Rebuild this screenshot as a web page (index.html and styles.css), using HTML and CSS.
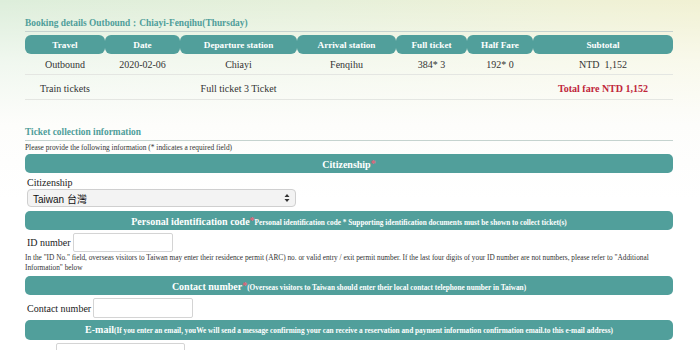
FILE: index.html
```html
<!DOCTYPE html>
<html>
<head>
<meta charset="utf-8">
<link rel="stylesheet" href="styles.css">
</head>
<body>
<div class="page">
  <h2 class="sec-title">Booking details Outbound：Chiayi-Fenqihu(Thursday)</h2>
  <table class="fare">
    <thead>
      <tr>
        <th class="c1">Travel</th>
        <th class="c2">Date</th>
        <th class="c3">Departure station</th>
        <th class="c4">Arrival station</th>
        <th class="c5">Full ticket</th>
        <th class="c6">Half Fare</th>
        <th class="c7">Subtotal</th>
      </tr>
    </thead>
    <tbody>
      <tr class="r1">
        <td>Outbound</td>
        <td>2020-02-06</td>
        <td>Chiayi</td>
        <td>Fenqihu</td>
        <td>384* 3</td>
        <td>192* 0</td>
        <td>NTD&nbsp; 1,152</td>
      </tr>
      <tr class="r2">
        <td>Train tickets</td>
        <td></td>
        <td>Full ticket 3 Ticket</td>
        <td></td>
        <td></td>
        <td></td>
        <td class="total">Total fare NTD 1,152</td>
      </tr>
    </tbody>
  </table>

  <h2 class="sec-title sec2">Ticket collection information</h2>
  <p class="hint">Please provide the following information (* indicates a required field)</p>

  <div class="bar bar-cit">Citizenship<span class="req">*</span></div>
  <div class="lbl">Citizenship</div>
  <div class="select">
    <span>Taiwan 台灣</span>
    <svg class="arrows" width="6" height="10" viewBox="0 0 6 10"><path d="M0.5 4 L3 1 L5.5 4 Z M0.5 6 L3 9 L5.5 6 Z" fill="#333"/></svg>
  </div>

  <div class="bar bar-id">Personal identification code<span class="req">*</span><small>Personal identification code * Supporting identification documents must be shown to collect ticket(s)</small></div>
  <div class="row row-id"><span class="lbl-in">ID number</span><span class="input in-id"></span></div>
  <p class="note">In the "ID No." field, overseas visitors to Taiwan may enter their residence permit (ARC) no. or valid entry / exit permit number. If the last four digits of your ID number are not numbers, please refer to "Additional Information" below</p>

  <div class="bar bar-contact">Contact number<span class="req">*</span><small>(Overseas visitors to Taiwan should enter their local contact telephone number in Taiwan)</small></div>
  <div class="row row-contact"><span class="lbl-in">Contact number</span><span class="input in-contact"></span></div>

  <div class="bar bar-mail">E-mail<small>(If you enter an email, youWe will send a message confirming your can receive a reservation and payment information confirmation email.to this e-mail address)</small></div>
  <div class="row row-mail"><span class="lbl-in">E-mail</span><span class="input in-mail"></span></div>
</div>
</body>
</html>
```
FILE: styles.css
```css
html, body {
  margin: 0;
  padding: 0;
}
body {
  width: 700px;
  height: 350px;
  overflow: hidden;
  font-family: "Liberation Serif", "Times New Roman", serif;
  color: #333;
  background:
    linear-gradient(180deg, rgba(255,255,255,0) 0px, rgba(255,255,255,0.55) 60px, #fdfdfb 125px, #ffffff 200px),
    linear-gradient(90deg, #ddeedb 0%, #e6f0da 45%, #eef1d6 80%, #f1f1d3 100%);
}
.page {
  width: 648px;
  margin-left: 25px;
}
.sec-title {
  margin: 0;
  padding-top: 17px;
  font-size: 9.4px;
  line-height: 13px;
  font-weight: bold;
  color: #4f9e9a;
  border-bottom: 1px solid #c5d3cf;
  padding-bottom: 1px;
}
.fare {
  margin-top: 3px;
  width: 648px;
  border-collapse: separate;
  border-spacing: 0;
  table-layout: fixed;
  font-size: 10px;
}
.fare th {
  background: #519f9b;
  color: #fff;
  font-weight: bold;
  font-size: 9.2px;
  height: 19px;
  padding: 0;
  border-radius: 6px;
  text-align: center;
}
.c1 { width: 80px; }
.c2 { width: 75px; }
.c3 { width: 117px; }
.c4 { width: 99px; }
.c5 { width: 71px; }
.c6 { width: 66px; }
.c7 { width: 140px; }
.fare td {
  text-align: center;
  padding: 0;
  color: #333;
  border-bottom: 1px solid #e4e6e2;
}
.fare .r1 td { height: 19px; padding-top: 1px; }
.fare .r2 td { height: 22px; padding-top: 2px; }
.fare .total {
  color: #c0263a;
  font-weight: bold;
}
.sec2 {
  padding-top: 26px;
}
.hint {
  margin: 2px 0 0;
  font-size: 7.4px;
  line-height: 10px;
  color: #333;
}
.bar {
  background: #519f9b;
  color: #fff;
  font-weight: bold;
  font-size: 10px;
  height: 19px;
  line-height: 19px;
  border-radius: 5px;
  text-align: center;
  white-space: nowrap;
}
.bar small {
  font-size: 7.3px;
}
.req {
  color: #ec6077;
  font-size: 10px;
  vertical-align: 1px;
}
.bar-cit { margin-top: 1px; }
.lbl {
  margin: 3px 0 0 2px;
  font-size: 10px;
  line-height: 13px;
  color: #222;
}
.select {
  margin-left: 2px;
  width: 269px;
  height: 18px;
  box-sizing: border-box;
  border: 1px solid #cfcfcf;
  border-radius: 4px;
  background: #f3f3f3;
  display: flex;
  align-items: center;
  justify-content: space-between;
  padding: 0 5px 0 5px;
  font-family: "Liberation Sans", Arial, "Noto Sans CJK TC", sans-serif;
  font-size: 10px;
  color: #111;
}
.bar-id { margin-top: 4px; }
.row {
  display: flex;
  align-items: center;
  margin-left: 2px;
  font-size: 10px;
  color: #222;
}
.lbl-in {
  margin-right: 2px;
}
.input {
  display: block;
  box-sizing: border-box;
  background: #fff;
  border: 1px solid #d4d4d4;
  border-radius: 2px;
}
.row-id { margin-top: 3px; }
.in-id { width: 100px; height: 19px; }
.note {
  margin: 1px 0 0;
  font-size: 7.3px;
  line-height: 10px;
  color: #333;
}
.bar-contact { margin-top: 3px; }
.row-contact { margin-top: 3px; }
.in-contact { width: 100px; height: 20px; }
.bar-mail { margin-top: 2px; height: 20px; line-height: 20px; }
.row-mail { margin-top: 3px; }
.in-mail { width: 129px; height: 20px; }
```
